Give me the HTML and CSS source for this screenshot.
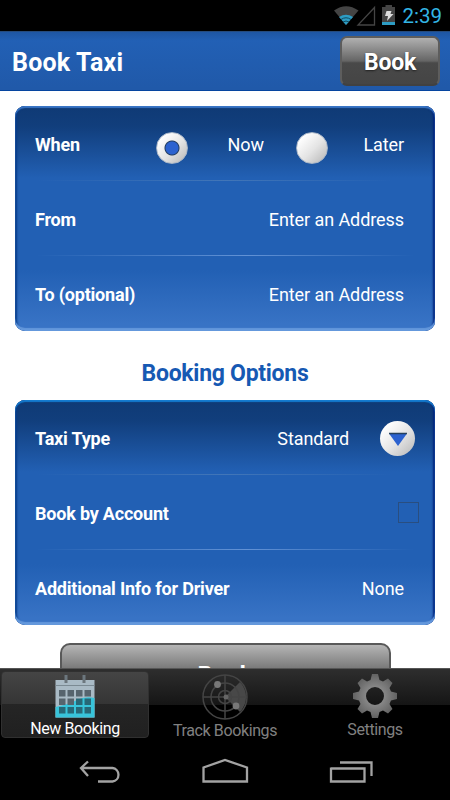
FILE: index.html
```html
<!DOCTYPE html>
<html lang="en">
<head>
<meta charset="utf-8">
<title>Book Taxi</title>
<link rel="stylesheet" href="styles.css">
</head>
<body>
<div class="phone">
  <div class="status">
    <svg width="74" height="31" viewBox="0 0 74 31">
      <path d="M1 10.500Q13 2 25.500 10.500L13 25Z" fill="#444"/>
      <path d="M6 17Q13 12.500 20 17L13 25Z" fill="#2d9dc4"/>
      <path d="M8 19.500Q13 16 18 19.500M10 22Q13 20 16 22" stroke="#10495f" fill="none"/>
      <path d="M41.500 7.500V25H25Z" fill="none" stroke="#444" stroke-width="1.300"/>
      <path d="M49 7h3.500V5h6.500v2h3v18H49Z" fill="#444"/>
      <path d="M49 22h13v3H49Z" fill="#2d9dc4"/>
      <path d="M53.500 11h5l-1 3h3L54 21l1-5h-3Z" fill="#ddd"/>
    </svg>
    <span class="clock">2:39</span>
  </div>
  <header class="header">
    <h1 class="title">Book Taxi</h1>
    <button class="book-small">Book</button>
  </header>
  <main class="content">
    <section class="card">
      <div class="row">
        <span class="label when">When</span>
        <span class="radio checked"></span><span class="value now">Now</span>
        <span class="radio"></span><span class="value later">Later</span>
      </div>
      <div class="row"><span class="label">From</span><span class="value address">Enter an Address</span></div>
      <div class="row"><span class="label">To (optional)</span><span class="value address">Enter an Address</span></div>
    </section>
    <h2 class="subtitle">Booking Options</h2>
    <section class="card second">
      <div class="row"><span class="label">Taxi Type</span><span class="value type">Standard</span>
        <span class="drop"><svg width="20" height="15" viewBox="0 0 20 15"><path d="M1 1.500H19L10 14Z" fill="#2c62cf"/><path d="M1 1.500H19" stroke="#26415e" stroke-width="1.500"/></svg></span>
      </div>
      <div class="row"><span class="label">Book by Account</span><span class="check"></span></div>
      <div class="row"><span class="label">Additional Info for Driver</span><span class="value">None</span></div>
    </section>
    <button class="book-large">Book</button>
  </main>
  <nav class="tabs">
    <div class="tab active">
      <svg width="40" height="44" viewBox="0 0 40 44">
        <path d="M.5 6H39.500V43.500H.5Z" fill="#a9bac5"/>
        <path d="M.5 33Q14 30 22 26T39.500 24V43.500H.5Z" fill="#38c4da"/>
        <path d="M.5 11.500h39" stroke="#7b8a93"/>
        <path d="M9.500 1h3v8h-3zM27.500 1h3v8h-3z" fill="#6c777e"/>
        <path d="M4 16h6.500v6.500H4zm8.500 0H19v6.500h-6.500zm8.500 0h6.500v6.500H21zm8.500 0H36v6.500h-6.500zM4 24.500h6.500V31H4zm8.500 0H19V31h-6.500z" fill="#56646d"/>
        <path d="M21 24.500h6.500V31H21zm8.500 0H36V31h-6.500zM4 33h6.500v6.500H4zm8.500 0H19v6.500h-6.500zm8.500 0h6.500v6.500H21zm8.500 0H36v6.500h-6.500z" fill="#276877"/>
      </svg>
      <span>New Booking</span>
    </div>
    <div class="tab radar">
      <svg width="46" height="46" viewBox="0 0 46 46">
        <path d="M23 23L38 8A21.500 21.500 0 0 1 38 38Z" fill="#484848"/>
        <g fill="none" stroke="#444" stroke-width="1.500"><circle cx="23" cy="23" r="22"/><circle cx="23" cy="23" r="14"/><circle cx="23" cy="23" r="6.500"/><path d="M1 23h44M23 1v44"/></g>
        <g fill="#777"><circle cx="15.500" cy="10.500" r="3.400"/><circle cx="34" cy="32" r="3.400"/><circle cx="24" cy="23" r="2.500" fill="#666"/></g>
      </svg>
      <span>Track Bookings</span>
    </div>
    <div class="tab">
      <svg width="44" height="44" viewBox="-22 -22 44 44">
        <defs><radialGradient id="metal"><stop offset=".4" stop-color="#888"/><stop offset="1" stop-color="#626262"/></radialGradient></defs>
        <path fill="url(#metal)" fill-rule="evenodd" d="M-3-22H3L4.500-16 8-14.500 13-17.500 17.500-13 14.500-8 16-4.500 22-3V3L16 4.500 14.500 8 17.500 13 13 17.500 8 14.500 4.500 16 3 22H-3L-4.500 16-8 14.500-13 17.500-17.500 13-14.500 8-16 4.500-22 3V-3L-16-4.500-14.500-8-17.500-13-13-17.500-8-14.500-4.500-16ZM-9 0A9 9 0 0 0 9 0A9 9 0 0 0-9 0Z"/>
      </svg>
      <span>Settings</span>
    </div>
  </nav>
  <div class="system">
    <svg width="450" height="62" viewBox="0 0 450 62" fill="none" stroke="#a3a3a3" stroke-width="2.300">
      <path d="M98 43.500h14.500a6.800 6.800 0 0 0 0-13.500H81M88 23.500L81 30l7 8"/>
      <path d="M203.500 43.500V29.500L225 22l22 7.500v14Z"/>
      <path d="M331 30.500h33.500v13H331V29.400M340 24.500h31.500V38"/>
    </svg>
  </div>
</div>
</body>
</html>
```
FILE: styles.css
```css
* { box-sizing: border-box; }
body { margin: 0; font-family: Roboto, "Liberation Sans", sans-serif; background: #fff; }
button { font-family: inherit; margin: 0; padding: 0; }
.phone { width: 450px; height: 800px; display: flex; flex-direction: column; overflow: hidden; }
.status { height: 31px; flex: none; background: #000; display: flex; justify-content: flex-end; align-items: center; padding-right: 8px; }
.status svg { margin-right: -7px; }
.clock { color: #33b5e5; font-size: 20.5px; width: 42px; text-align: right; white-space: nowrap; }
.header { height: 60px; flex: none; display: flex; align-items: center; justify-content: space-between; padding: 0 10px 0 12px; background: linear-gradient(#1e56a3, #2260b5 15%, #2059a9 96%); border-top: 1px solid #254b7d; border-bottom: 1px solid #0645a0; }
.title { margin: 2px 0 0; color: #fff; font-size: 25px; font-weight: 700; letter-spacing: .2px; }
.book-small { width: 100px; height: 50px; padding-top: 2px; color: #fff; font-size: 23px; font-weight: 700; letter-spacing: -.2px; border: 2px solid #5d5d5d; border-bottom-color: #414141; border-radius: 7px; background: linear-gradient(#b0b0b0, #656565 50%, #494949 54%, #454545); text-shadow: 0 1px 2px #222; }
.content { flex: 1; min-height: 0; overflow: hidden; padding: 15px 15px 0; display: flex; flex-direction: column; }
.card { height: 225px; flex: none; border-radius: 10px; overflow: hidden; border: 0; background: linear-gradient(#0f3a75, #113e7c 9%, #2260b4 32%, #2260b4 73%, #3873c5 97%); box-shadow: inset 0 2px 1px #3975c5, inset 0 -3px 1px #6498dc, inset 2px 0 2px #073b88, inset -2px 0 2px #00227c; }
.second { box-shadow: inset 0 2px 1px #147bcf, inset 0 -3px 1px #6498dc, inset 2px 0 2px #073b88, inset -2px 0 2px #00227c; }
.row { height: 75px; display: flex; align-items: center; padding: 2px 31px 0 20px; color: #fff; font-size: 18px; background: linear-gradient(90deg, transparent 5%, #6292d5 55%, transparent 95%) 0 100% / 100% 1px no-repeat; }
.row:first-child { background-image: linear-gradient(90deg, transparent 5%, #4276b8 50%, transparent 90%); }
.row:last-child { background: none; }
.label { font-weight: 700; letter-spacing: -.2px; }
.value { margin-left: auto; letter-spacing: -.08px; }
.when { width: 121px; }
.radio { width: 32px; height: 32px; flex: none; border-radius: 50%; border: 1px solid #a9b6c7; background: linear-gradient(135deg, #fff 15%, #e4e4e4 55%, #b5b5b5); margin-top: 6px; }
.checked { background: radial-gradient(circle, #2c62cf 6px, #233d60 7px, transparent 8px), linear-gradient(135deg, #fff 15%, #e4e4e4 55%, #b5b5b5); }
.now { margin: 0 32px 0 auto; }
.later { width: 76px; text-align: right; margin: 0; }
.type { margin-right: 31px; }
.drop { width: 35px; height: 35px; margin: -1px -11px 0 0; border-radius: 50%; background: linear-gradient(135deg, #fff 15%, #e4e4e4 55%, #b5b5b5); display: flex; align-items: center; justify-content: center; padding-top: 3px; }
.check { width: 21px; height: 21px; margin: -2px -15px 0 auto; border: 1px solid #294e80; }
.subtitle { margin: 29px 0 26px; height: 28px; flex: none; line-height: 28px; text-align: center; color: #1659b3; font-size: 23px; font-weight: 700; letter-spacing: -.28px; }
.second { margin-top: -14px; }
.book-large { width: 331px; height: 58px; flex: none; margin: 18px auto 0; padding-top: 6px; border: 2px solid #595959; border-radius: 10px; background: linear-gradient(#b5b5b5, #707070 50%, #494949); color: #fff; font-size: 24px; font-weight: 700; }
.tabs { position: relative; height: 70px; flex: none; display: grid; grid-template-columns: repeat(3, 150px); background: linear-gradient(#2e2e2e, #151515 36px, #000 36px); border-top: 1px solid #555; }
.tab { display: flex; flex-direction: column; align-items: center; color: #808080; font-size: 16px; letter-spacing: -.38px; padding-top: 5px; line-height: 20px; }
.tab svg { flex: none; }
.tab span { white-space: nowrap; margin-top: 2px; }
.radar span { margin-top: 1px; }
.active { margin: 2px 1px 0; height: 67px; padding-top: 2px; border-radius: 4px; border: 1px solid #303030; color: #fff; background: linear-gradient(#454545, #353535 32px, #252525 32px, #202020); }
.active span { margin-top: 1px; }
.system { height: 62px; flex: none; background: #000; }
.system svg { display: block; }
```
